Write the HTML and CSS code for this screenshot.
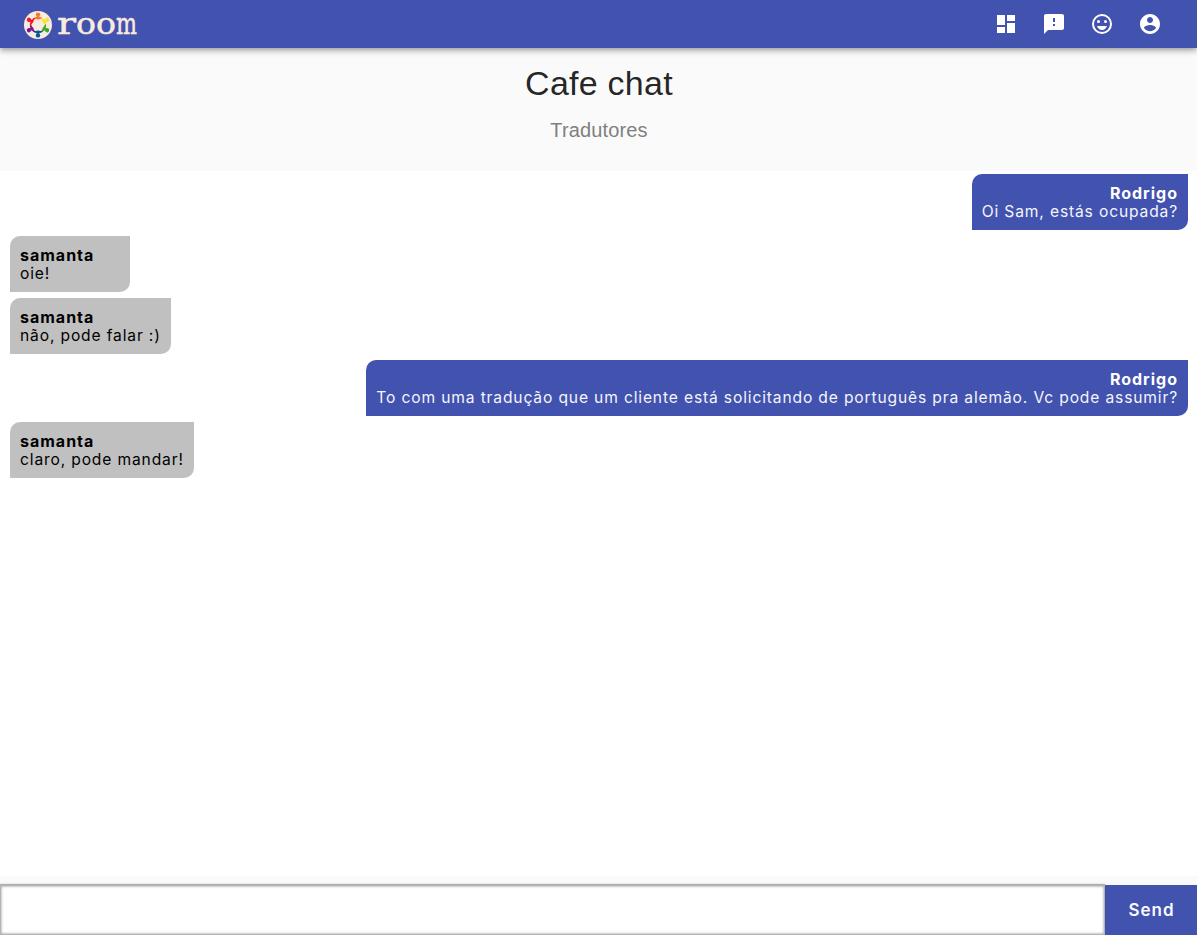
FILE: index.html
```html
<!DOCTYPE html>
<html lang="pt">
<head>
<meta charset="utf-8">
<title>Cafe chat</title>
<link rel="stylesheet" href="styles.css">
</head>
<body>
<header class="bar">
  <svg class="logo" width="124" height="48" viewBox="0 -8 124 48" role="img" aria-label="room">
    <defs><g id="person"><circle cx="16" cy="6.600" r="2.200"/><path d="M12.200 9.600Q14.800 9.400 15.200 8H16.800Q17.200 9.400 19.800 9.600L20.600 11.200Q18 10.900 16 11.400Q14 10.900 11.400 11.200Z"/></g></defs>
    <circle cx="16" cy="17" r="14" fill="#faebdf"/>
    <use href="#person" fill="#f9792b"/>
    <use href="#person" fill="#f3e43a" transform="rotate(60 16 17)"/>
    <use href="#person" fill="#40a62c" transform="rotate(120 16 17)"/>
    <use href="#person" fill="#075a9b" transform="rotate(180 16 17)"/>
    <use href="#person" fill="#7c168e" transform="rotate(240 16 17)"/>
    <use href="#person" fill="#f11b2c" transform="rotate(300 16 17)"/>
    <g class="logo-text">
      <text x="35" y="25.600" textLength="19" lengthAdjust="spacingAndGlyphs">r</text>
      <text x="54" y="25.600" textLength="20" lengthAdjust="spacingAndGlyphs">o</text>
      <text x="74" y="25.600" textLength="20" lengthAdjust="spacingAndGlyphs">o</text>
      <text x="94" y="25.600" textLength="21" lengthAdjust="spacingAndGlyphs">m</text>
    </g>
  </svg>
  <nav class="actions">
    <svg class="icon" viewBox="0 0 24 24"><path d="M3 13h8V3H3v10zm0 8h8v-6H3v6zm10 0h8V11h-8v10zm0-18v6h8V3h-8z"/></svg>
    <svg class="icon" viewBox="0 0 24 24"><path d="M20 2H4c-1.100 0-1.990.9-1.990 2L2 22l4-4h14c1.100 0 2-.9 2-2V4c0-1.100-.9-2-2-2zm-7 12h-2v-2h2v2zm0-4h-2V6h2v4z"/></svg>
    <svg class="icon" viewBox="0 0 24 24"><path fill-rule="evenodd" d="M12 2a10 10 0 1 0 0 20a10 10 0 1 0 0-20zM12 4a8 8 0 1 1 0 16a8 8 0 1 1 0-16z"/><circle cx="8.500" cy="9.500" r="1.500"/><circle cx="15.500" cy="9.500" r="1.500"/><path d="M12 18c2.280 0 4.220-1.660 5-4H7c.78 2.340 2.720 4 5 4z"/></svg>
    <svg class="icon" viewBox="0 0 24 24"><path d="M12 2C6.480 2 2 6.480 2 12s4.480 10 10 10 10-4.480 10-10S17.520 2 12 2zm0 3c1.660 0 3 1.340 3 3s-1.340 3-3 3-3-1.340-3-3 1.340-3 3-3zm0 14.200c-2.500 0-4.710-1.280-6-3.220.03-1.990 4-3.080 6-3.080 1.990 0 5.970 1.090 6 3.080-1.290 1.940-3.500 3.220-6 3.220z"/></svg>
  </nav>
</header>
<section class="heading">
  <h1 class="title">Cafe chat</h1>
  <p class="subtitle">Tradutores</p>
</section>
<main class="messages">
  <article class="msg mine"><b class="author">Rodrigo</b><span class="text">Oi Sam, estás ocupada?</span></article>
  <article class="msg"><b class="author">samanta</b><span class="text">oie!</span></article>
  <article class="msg"><b class="author">samanta</b><span class="text">não, pode falar :)</span></article>
  <article class="msg mine"><b class="author">Rodrigo</b><span class="text">To com uma tradução que um cliente está solicitando de português pra alemão. Vc pode assumir?</span></article>
  <article class="msg"><b class="author">samanta</b><span class="text">claro, pode mandar!</span></article>
</main>
<form class="composer">
  <input class="field" type="text" aria-label="Message">
  <button class="send" type="button">Send</button>
</form>
</body>
</html>
```
FILE: styles.css
```css
* { box-sizing: border-box; }
body {
  margin: 0;
  height: 100vh;
  display: flex;
  flex-direction: column;
  overflow: hidden;
  background: #fafafa;
  font-family: Inter, "Liberation Sans", sans-serif;
}
.bar {
  flex: none;
  height: 48px;
  padding: 0 35px 0 22px;
  display: flex;
  align-items: center;
  justify-content: space-between;
  background: #4252af;
  box-shadow: 0 2px 4px -1px rgba(0,0,0,.2), 0 4px 5px rgba(0,0,0,.14), 0 1px 10px rgba(0,0,0,.12);
}
.logo { display: block; overflow: visible; }
.logo-text { font-family: "DejaVu Serif", serif; font-size: 30px; fill: #faebdf; stroke: #faebdf; stroke-width: .5px; stroke-linejoin: round; }
.actions { display: flex; gap: 24px; }
.icon { width: 24px; height: 24px; fill: #fff; }
.heading {
  flex: none;
  height: 123px;
  padding: 15px 0 0 1px;
  text-align: center;
  font-family: "Liberation Sans", sans-serif;
}
.title { margin: 0; font-size: 34px; line-height: 40px; font-weight: 400; letter-spacing: .25px; color: rgba(0,0,0,.87); }
.subtitle { margin: 11px 0 0; font-size: 20px; line-height: 32px; letter-spacing: .15px; color: #808080; }
.messages {
  flex: 1;
  padding: 3px 9px 0 10px;
  display: flex;
  flex-direction: column;
  align-items: flex-start;
  gap: 6px;
  background: #fff;
}
.msg {
  min-width: 120px;
  height: 56px;
  padding: 10px;
  display: flex;
  flex-direction: column;
  border-radius: 10px 0;
  background: #c0c0c0;
  color: #000;
  font-size: 16px;
  line-height: 18px;
  letter-spacing: 1px;
  white-space: nowrap;
}
.mine { align-self: flex-end; align-items: flex-end; background: #4252af; color: #fff; }
.author { font-weight: 700; }
.text { padding-top: 1px; font-size: 15.6px; letter-spacing: .855px; }
.mine .text { color: #f4f5fb; }
.composer { flex: none; height: 59px; padding-top: 9px; display: flex; }
.field {
  flex: 1;
  min-width: 0;
  margin-top: -1px;
  border: 1px solid #b4b4b6;
  border-top: 2px solid #b0b0b2;
  box-shadow: inset 0 0 3px #8f8f91, 0 0 2px #ccc;
  border-radius: 0;
  background: #fff;
  outline: 0;
}
.send {
  width: 92px;
  padding: 0 0 0 1px;
  border: 0;
  background: #4252af;
  color: #f8f8ff;
  font: 600 17px Inter, sans-serif;
  letter-spacing: 1px;
}
```
